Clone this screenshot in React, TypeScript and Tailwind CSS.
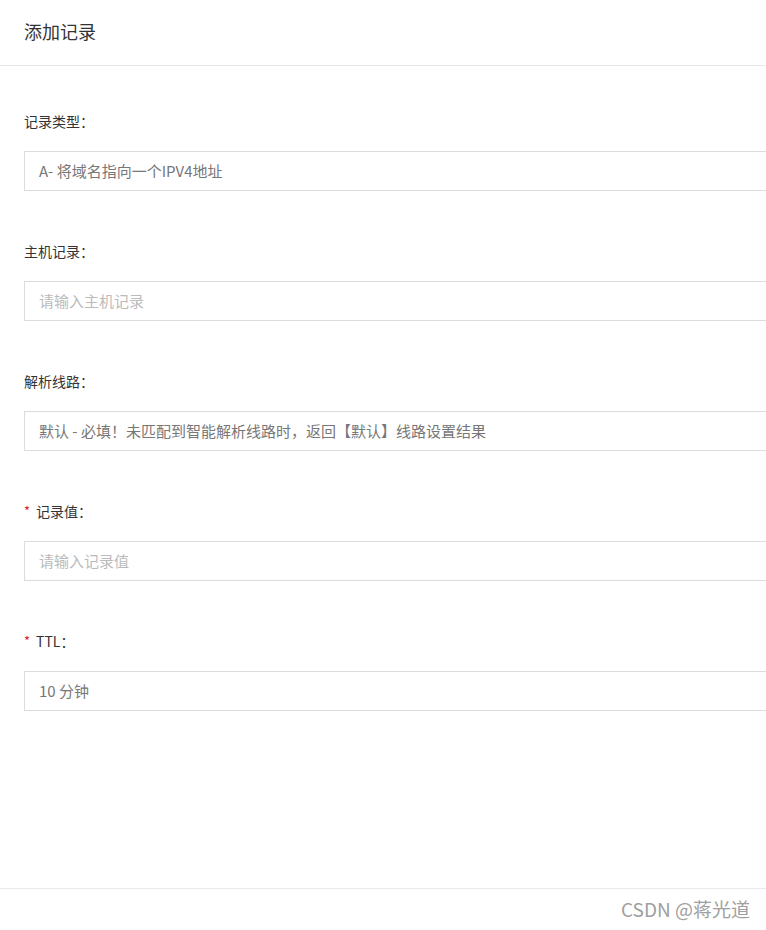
import React from "react";

const font = { fontFamily: '"Noto Sans CJK SC", "Noto Sans", sans-serif' };

function Field({
  label,
  required,
  text,
  placeholder,
}: {
  label: string;
  required?: boolean;
  text: string;
  placeholder?: boolean;
}) {
  return (
    <div className="flex flex-col">
      <div className="flex h-[20px] items-center text-[14px] text-[#333]">
        {required && <span className="mr-[6px] text-[13px] text-[#d9262b]">*</span>}
        <span>{label}：</span>
      </div>
      <div className="mt-[20px] flex h-[40px] w-[800px] items-center border border-[#dcdcdc] bg-white px-[14px]">
        <span className={`text-[15px] ${placeholder ? "text-[#bbbbbb]" : "text-[#777]"}`}>{text}</span>
      </div>
    </div>
  );
}

export default function App() {
  return (
    <div className="flex h-[930px] w-[766px] flex-col overflow-hidden bg-white" style={font}>
      <div className="flex h-[66px] shrink-0 items-center border-b border-[#e8e8e8] pb-[2px] pl-[24px]">
        <span className="text-[18px] text-[#333]">添加记录</span>
      </div>
      <div className="flex flex-col gap-[50px] pl-[24px] pt-[45px]">
        <Field label="记录类型" text="A- 将域名指向一个IPV4地址" />
        <Field label="主机记录" text="请输入主机记录" placeholder />
        <Field label="解析线路" text="默认 - 必填！未匹配到智能解析线路时，返回【默认】线路设置结果" />
        <Field label="记录值" required text="请输入记录值" placeholder />
        <Field label="TTL" required text="10 分钟" />
      </div>
      <div className="flex-1" />
      <div className="flex h-[42px] shrink-0 items-center justify-end border-t border-[#e8ebee] pr-[16px]">
        <span className="text-[19px] text-[#a0a0a0]">CSDN @蒋光道</span>
      </div>
    </div>
  );
}
